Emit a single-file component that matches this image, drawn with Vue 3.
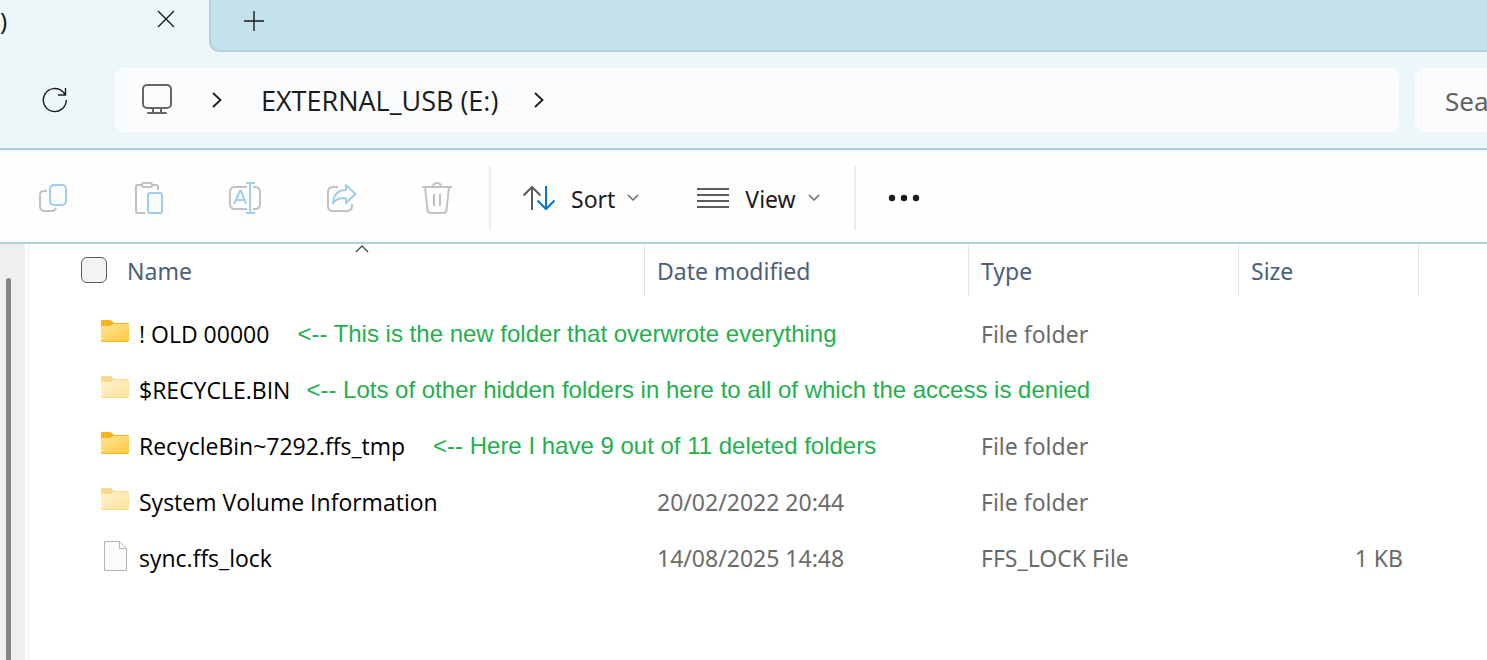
<script setup>
import { ref } from 'vue'

const selectAll = ref(false)
const search = ref('')

const files = [
  { name: '! OLD 00000', icon: 'folder', note: '<-- This is the new folder that overwrote everything', gap: 'wide', date: '', type: 'File folder', size: '' },
  { name: '$RECYCLE.BIN', icon: 'hidden', note: '<-- Lots of other hidden folders in here to all of which the access is denied', gap: 'narrow', date: '', type: '', size: '' },
  { name: 'RecycleBin~7292.ffs_tmp', icon: 'folder', note: '<-- Here I have 9 out of 11 deleted folders', gap: 'wide', date: '', type: 'File folder', size: '' },
  { name: 'System Volume Information', icon: 'hidden', note: '', gap: '', date: '20/02/2022 20:44', type: 'File folder', size: '' },
  { name: 'sync.ffs_lock', icon: 'file', note: '', gap: '', date: '14/08/2025 14:48', type: 'FFS_LOCK File', size: '1 KB' },
]
</script>

<template>
  <div class="explorer">
    <header class="tabs">
      <div class="tab">
        <span class="tab-title">)</span>
        <button class="icon-button close" aria-label="Close tab">
          <svg width="18" height="18" viewBox="0 0 18 18"><path d="M1 1 17 17M17 1 1 17" fill="none" stroke="#1b1b1b" stroke-width="1.4" /></svg>
        </button>
      </div>
      <div class="strip">
        <button class="icon-button" aria-label="New tab">
          <svg width="20" height="20" viewBox="0 0 20 20"><path d="M10 0V20M0 10H20" fill="none" stroke="#1b1b1b" stroke-width="1.4" /></svg>
        </button>
      </div>
    </header>

    <div class="navbar">
      <button class="icon-button refresh" aria-label="Refresh">
        <svg width="26" height="26" viewBox="0 0 26 26" fill="none" stroke="#1b1b1b" stroke-width="1.4"><path d="M24.300 13A11.500 11.500 0 1 1 21 5L23.500 7.500M23.500 1V8H16" /></svg>
      </button>
      <nav class="address" aria-label="Location">
        <button class="icon-button" aria-label="This PC">
          <svg width="32" height="32" viewBox="0 0 32 32" fill="none" stroke="#666" stroke-width="2"><rect x="2" y="1" width="28" height="23" rx="4" /><path d="M12 24V29M20 24V29" /><path d="M7 29H25" stroke-linecap="round" /></svg>
        </button>
        <svg class="chevron first" width="10" height="16" viewBox="0 0 10 16"><path d="M1 1 8.5 8 1 15" fill="none" stroke="#1b1b1b" stroke-width="1.8" /></svg>
        <button class="crumb">EXTERNAL_USB (E:)</button>
        <svg class="chevron" width="10" height="16" viewBox="0 0 10 16"><path d="M1 1 8.5 8 1 15" fill="none" stroke="#1b1b1b" stroke-width="1.8" /></svg>
      </nav>
      <div class="search">
        <input v-model="search" type="text" aria-label="Search" placeholder="Search" />
      </div>
    </div>

    <div class="toolbar">
      <button class="tool" disabled aria-label="Copy">
        <svg width="32" height="32" viewBox="0 0 32 32" fill="none" stroke-width="2"><path d="M10 9H7Q3 9 3 13V24Q3 29 8 29H15Q18 29 19 26" stroke="#c2c2c2" /><rect x="13" y="3" width="16" height="20" rx="4" fill="#fbfbfb" stroke="#9fcdf0" /></svg>
      </button>
      <button class="tool" disabled aria-label="Paste">
        <svg width="32" height="32" viewBox="0 0 32 32" fill="none" stroke-width="2"><path d="M9 3H4Q3 3 3 5V29Q3 31 5 31H12M19 3H23Q25 3 25 5V8" stroke="#c2c2c2" /><rect x="9" y="1" width="10" height="4" rx="2" stroke="#c2c2c2" /><rect x="15" y="11" width="14" height="20" rx="2" fill="#fbfbfb" stroke="#9fcdf0" /></svg>
      </button>
      <button class="tool" disabled aria-label="Rename">
        <svg width="32" height="32" viewBox="0 0 32 32" fill="none" stroke-width="2"><path d="M18 5H6Q1 5 1 10V22Q1 27 6 27H18M24 5H26Q31 5 31 10V22Q31 27 26 27H24" stroke="#c2c2c2" /><path d="M17 1H26M17 31H26M21 1V31M5 22 11 9H12L17 22M7 18H16" stroke="#9fcdf0" /></svg>
      </button>
      <button class="tool" disabled aria-label="Share">
        <svg width="32" height="32" viewBox="0 0 32 32" fill="none" stroke-width="2"><path d="M13 5H8Q3 5 3 10V24Q3 29 8 29H21Q27 29 27 24V22" stroke="#c2c2c2" /><path d="M21 3 30.500 12 21 21V16.500Q12 15 8 21.500Q9 8 21 8Z" stroke="#9fcdf0" stroke-linejoin="round" /></svg>
      </button>
      <button class="tool" disabled aria-label="Delete">
        <svg width="32" height="32" viewBox="0 0 32 32" fill="none" stroke="#c2c2c2" stroke-width="2"><path d="M1 5H31M4 5 6.500 28Q7 31 10 31H22Q25 31 25.500 28L28 5M12 5Q12 1 16 1T20 5M13 12V24M19 12V24" /></svg>
      </button>
      <span class="divider"></span>
      <button class="menu sort">
        <svg width="32" height="26" viewBox="0 0 32 26" fill="none" stroke-width="2"><path d="M9 25V2M0.500 10.500 9 2 17.500 10.500" stroke="#5c5c5c" /><path d="M23 1V24M14.500 15.500 23 24 31.500 15.500" stroke="#0078d4" /></svg>
        <span class="label">Sort</span>
        <svg class="down" width="12" height="8" viewBox="0 0 12 8"><path d="M1 1 6 6 11 1" fill="none" stroke="#6b6b6b" stroke-width="1.500" /></svg>
      </button>
      <button class="menu view">
        <svg width="32" height="20" viewBox="0 0 32 20"><path d="M0 1H32M0 7H32M0 13H32M0 19H32" stroke="#5c5c5c" stroke-width="2" /></svg>
        <span class="label">View</span>
        <svg class="down" width="12" height="8" viewBox="0 0 12 8"><path d="M1 1 6 6 11 1" fill="none" stroke="#6b6b6b" stroke-width="1.500" /></svg>
      </button>
      <span class="divider"></span>
      <button class="icon-button more" aria-label="See more">
        <svg width="32" height="8" viewBox="0 0 32 8" fill="#1b1b1b"><circle cx="4" cy="4" r="3.200" /><circle cx="16" cy="4" r="3.200" /><circle cx="28" cy="4" r="3.200" /></svg>
      </button>
    </div>

    <main class="content">
      <aside class="sidebar"><div class="thumb"></div></aside>
      <div class="listing">
        <table>
          <colgroup>
            <col class="c-name" /><col class="c-date" /><col class="c-type" /><col class="c-size" /><col />
          </colgroup>
          <thead>
            <tr>
              <th class="name-head">
                <svg class="caret" width="14" height="8" viewBox="0 0 14 8"><path d="M1 7 7 1 13 7" fill="none" stroke="#444" stroke-width="1.300" /></svg>
                <label class="head-label"><input v-model="selectAll" type="checkbox" /><span>Name</span></label>
              </th>
              <th>Date modified</th>
              <th>Type</th>
              <th>Size</th>
              <td class="rest"></td>
            </tr>
          </thead>
          <tbody>
            <tr v-for="file in files" :key="file.name">
              <td class="name-cell">
                <div class="entry">
                  <svg v-if="file.icon === 'file'" class="icon" width="28" height="32" viewBox="0 0 28 32"><path d="M3.500 1.500H18.500L25.500 8.500V30.500H3.500ZM18.500 1.500V8.500H25.500" fill="#fbfbfb" stroke="#b5b5b5" /></svg>
                  <svg v-else class="icon" :class="{ faded: file.icon === 'hidden' }" width="28" height="32" viewBox="0 0 28 32">
                    <defs><linearGradient :id="'g-' + file.icon" x1="0" y1="0" x2="1" y2="1"><stop offset="0" stop-color="#ffe69c" /><stop offset="1" stop-color="#ffc93c" /></linearGradient></defs>
                    <path d="M0 6V5Q0 4 1 4H9Q10 4 11 5L13 7H27Q28 7 28 8V24Q28 26 27 26H1Q0 26 0 25Z" fill="#f8b41b" />
                    <path d="M0 10H10L12 8H28V24Q28 25 27 25H1Q0 25 0 24Z" :fill="'url(#g-' + file.icon + ')'" />
                  </svg>
                  <span class="filename">{{ file.name }}</span>
                  <span v-if="file.note" class="note" :class="file.gap">{{ file.note }}</span>
                </div>
              </td>
              <td>{{ file.date }}</td>
              <td>{{ file.type }}</td>
              <td class="size">{{ file.size }}</td>
              <td class="rest"></td>
            </tr>
          </tbody>
        </table>
      </div>
    </main>
  </div>
</template>

<style>
body { margin: 0; background: #fff; }
</style>

<style scoped>
.explorer {
  display: flex;
  flex-direction: column;
  min-height: 100vh;
  overflow: hidden;
  font-family: "Segoe UI", "Noto Sans", "Open Sans", sans-serif;
  font-size: 23px;
  color: #1b1b1b;
  background: #fff;
}
button, input { font: inherit; color: inherit; }
button { display: flex; align-items: center; border: 0; padding: 0; background: none; }
svg { display: block; flex: none; }
.tabs { display: flex; height: 52px; background: #edf6f9; }
.tab { display: flex; width: 209px; flex: none; box-sizing: border-box; justify-content: space-between; padding-right: 34px; }
.tab-title { line-height: 42px; font-size: 24px; }
.close { height: 38px; }
.strip { flex: 1; border-left: 2px solid #b3d1db; border-bottom: 2px solid #b3d1db; border-bottom-left-radius: 10px; background: #c4e2eb; padding-left: 33px; }
.strip button { height: 42px; }
.navbar { display: flex; align-items: center; height: 96px; background: #edf6f9; border-bottom: 2px solid #b0cfd9; }
.refresh { margin: 0 47px 0 42px; }
.address { display: flex; flex: 1; align-items: center; height: 64px; padding-left: 26px; border-radius: 9px; background: #fbfcfe; }
.address .first { margin: 0 39px 0 39px; }
.crumb { font-family: "Segoe UI", "Open Sans", sans-serif; font-size: 27px; margin-right: 36px; white-space: nowrap; }
.search { width: 72px; flex: none; margin-left: 16px; overflow: hidden; border-radius: 9px 0 0 9px; background: #fbfcfe; }
.search input { display: block; width: 240px; height: 64px; box-sizing: border-box; padding: 2px 30px 0; border: 0; background: transparent; font-size: 26px; outline: none; }
.search input::placeholder { color: #626262; opacity: 1; }
.toolbar { display: flex; align-items: center; height: 88px; padding: 4px 0 0 5px; background: #fefefe; border-bottom: 2px solid #b0cfd9; }
.tool { width: 96px; height: 64px; justify-content: center; }
.divider { width: 2px; height: 64px; margin-left: 4px; background: #ededed; }
.menu { height: 64px; gap: 16px; }
.menu .label { padding-top: 2px; }
.menu .down { margin-left: -4px; }
.sort { margin-left: 32px; }
.view { margin: 0 30px 0 58px; }
.more { margin-left: 32px; height: 64px; }
.content { display: flex; flex: 1; }
.sidebar { display: flex; width: 25px; flex: none; box-sizing: border-box; padding: 34px 0 0 6px; background: #efefef; }
.thumb { width: 5px; border-radius: 3px 3px 0 0; background: #858585; }
.listing { flex: 1; min-width: 0; margin-left: 3px; border-left: 2px solid #f5f5f5; }
table { width: 100%; table-layout: fixed; border-collapse: separate; border-spacing: 0; color: #6b6b6b; }
.c-name { width: 615px; }
.c-date { width: 324px; }
.c-type { width: 270px; }
.c-size { width: 180px; }
th { position: relative; height: 52px; box-sizing: border-box; padding: 2px 0 0 12px; border-right: 1px solid #e5e5e5; font-weight: 400; text-align: left; color: #4c607a; }
tbody::before { content: ""; display: block; height: 10px; }
td { height: 56px; padding: 0 0 0 12px; box-sizing: border-box; white-space: nowrap; }
td.rest { height: 52px; padding: 0; }
.name-head { padding-left: 51px; }
.caret { position: absolute; left: 325px; top: 1px; }
.head-label { display: flex; align-items: center; }
.head-label input { appearance: none; width: 26px; height: 26px; margin: 0 20px 2px 0; box-sizing: border-box; border: 1px solid #5e5e5e; border-radius: 6px; background: #f3f3f3; }
.head-label input:checked { background: #0078d4; }
.name-cell { padding-left: 71px; color: #000; }
.entry { display: flex; align-items: center; }
.icon { margin: 0 10px 4px 0; }
.faded { opacity: 0.5; }
.filename { font-family: "Segoe UI", "Open Sans", sans-serif; }
.note { font-family: "Liberation Sans", Arial, sans-serif; font-size: 24px; color: #22b14c; }
.wide { margin-left: 28px; }
.narrow { margin-left: 16px; }
td.size { padding: 0 16px 0 0; text-align: right; }
</style>
